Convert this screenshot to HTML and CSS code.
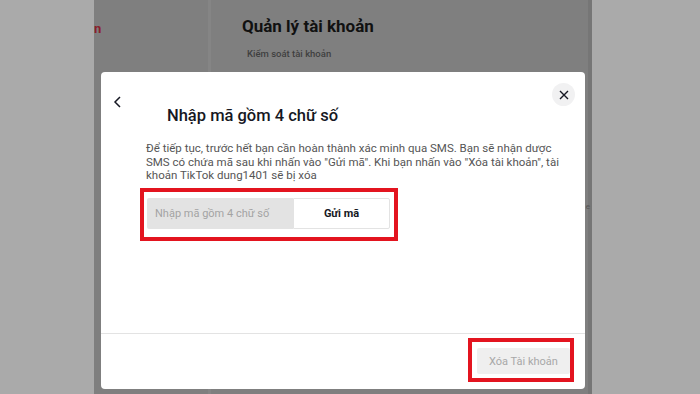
FILE: index.html
```html
<!DOCTYPE html>
<html lang="vi">
<head>
    <meta charset="UTF-8">
    <meta name="viewport" content="width=device-width, initial-scale=1.0">
    <title>Xóa tài khoản</title>
    <link rel="stylesheet" href="styles.css">
</head>
<body>
    <div class="screen">
        <div class="side side-left"></div>
        <div class="page">
            <div class="nav">
                <span class="nav-item">n</span>
            </div>
            <div class="main">
                <h2 class="main-title">Quản lý tài khoản</h2>
                <p class="main-sub">Kiểm soát tài khoản</p>
                <span class="main-mark">e</span>
            </div>
        </div>
        <div class="side side-right"></div>
    </div>

    <div class="modal">
        <button class="btn-close" aria-label="Đóng">
            <svg width="10" height="10" viewBox="0 0 10 10">
                <path d="M1 1 L9 9 M9 1 L1 9" stroke="#161823" stroke-width="1.4" fill="none"/>
            </svg>
        </button>
        <div class="modal-body">
            <div class="modal-header">
                <button class="btn-back" aria-label="Quay lại">
                    <svg width="9" height="12" viewBox="0 0 9 12">
                        <path d="M7 1 L2 6 L7 11" stroke="#161823" stroke-width="1.5" fill="none"/>
                    </svg>
                </button>
                <h1 class="modal-title">Nhập mã gồm 4 chữ số</h1>
            </div>
            <p class="modal-text">Để tiếp tục, trước hết bạn cần hoàn thành xác minh qua SMS. Bạn sẽ nhận dược<br>SMS có chứa mã sau khi nhấn vào "Gửi mã". Khi bạn nhấn vào "Xóa tài khoản", tài<br>khoản TikTok dung1401 sẽ bị xóa</p>
            <div class="highlight highlight-code">
                <div class="code-group">
                    <input type="text" class="code-input" placeholder="Nhập mã gồm 4 chữ số">
                    <button class="btn-send">Gửi mã</button>
                </div>
            </div>
        </div>
        <div class="modal-footer">
            <div class="highlight highlight-delete">
                <button class="btn-delete" disabled>Xóa Tài khoản</button>
            </div>
        </div>
    </div>
</body>
</html>
```

FILE: styles.css
```css
body {
    margin: 0;
    font-family: Roboto, "Noto Sans", Arial, sans-serif;
    color: #161823;
    overflow: hidden;
}
.screen {
    display: flex;
    height: 394px;
}
.side {
    background-color: #aaaaaa;
}
.side-left {
    width: 94px;
}
.side-right {
    flex: 1;
}
.page {
    width: 498px;
    display: flex;
    background-color: #7f7f7f;
}
.nav {
    width: 114px;
    border-right: 3px solid #858585;
    padding-top: 18px;
}
.nav-item {
    font-size: 13px;
    font-weight: bold;
    color: #8a1e2c;
}
.main {
    flex: 1;
    padding-left: 31px;
    position: relative;
    border-right: 4px solid #767676;
}
.main-title {
    margin: 16px 0 0 0;
    font-size: 17px;
    font-weight: bold;
    color: #111111;
}
.main-sub {
    margin: 12px 0 0 5px;
    font-size: 9.5px;
    font-weight: 500;
    color: #3f3f3f;
}
.main-mark {
    position: absolute;
    right: -2px;
    top: 202px;
    font-size: 8px;
    color: #555;
}
.modal {
    position: absolute;
    left: 101px;
    top: 72px;
    width: 484px;
    height: 317px;
    background-color: white;
    border-radius: 4px;
    display: flex;
    flex-direction: column;
}
.modal-body {
    flex: 1;
}
.modal-header {
    display: flex;
    align-items: flex-start;
}
button {
    font-family: inherit;
    border: none;
    background: none;
    padding: 0;
}
.btn-back {
    margin: 24px 0 0 12px;
    width: 9px;
    height: 12px;
    display: block;
}
.btn-close {
    position: absolute;
    left: 451px;
    top: 11px;
    width: 23px;
    height: 23px;
    border-radius: 50%;
    background-color: #f1f1f2;
    display: flex;
    align-items: center;
    justify-content: center;
}
.modal-title {
    margin: 33px 0 0 45px;
    font-size: 16.5px;
    line-height: 22px;
    font-weight: 500;
}
.modal-text {
    margin: 15px 0 0 45px;
    font-size: 11.5px;
    line-height: 13.5px;
    color: #555555;
    white-space: nowrap;
}
.highlight {
    border: 4px solid #e3141f;
}
.highlight-code {
    width: 247px;
    margin: 5px 0 0 39px;
    padding: 6px 0 8px 3px;
}
.code-group {
    display: flex;
    height: 31px;
}
.code-input {
    width: 146px;
    box-sizing: border-box;
    border: none;
    border-radius: 2px 0 0 2px;
    background-color: #e3e3e3;
    padding: 0 8px;
    font-family: inherit;
    font-size: 11px;
    outline: none;
}
.code-input::placeholder {
    color: #a3a3a3;
}
.btn-send {
    width: 97px;
    border: 1px solid #e3e3e3;
    border-radius: 0 2px 2px 0;
    background-color: white;
    font-size: 11px;
    font-weight: bold;
    color: #161823;
}
.modal-footer {
    border-top: 1px solid #e3e3e3;
    height: 56px;
    display: flex;
    justify-content: flex-end;
    align-items: flex-start;
    padding: 4px 11px 0 0;
    box-sizing: border-box;
}
.highlight-delete {
    padding: 6px 0 4px 5px;
}
.btn-delete {
    width: 93px;
    height: 26px;
    border-radius: 2px;
    background-color: #efefef;
    color: #a8a8a8;
    font-size: 11px;
}
```
